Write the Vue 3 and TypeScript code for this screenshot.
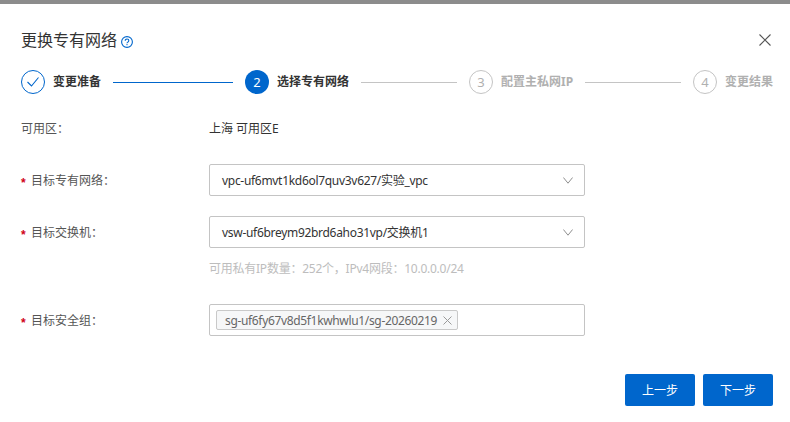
<script setup lang="ts">
interface Step { label: string; state: 'done' | 'active' | 'todo'; num: number; lineOn: boolean }
const steps: Step[] = [
  { label: '变更准备', state: 'done', num: 1, lineOn: true },
  { label: '选择专有网络', state: 'active', num: 2, lineOn: false },
  { label: '配置主私网IP', state: 'todo', num: 3, lineOn: false },
]
</script>

<template>
  <div class="page">
    <div class="topbar"></div>
    <div class="head">
      <div class="title-wrap">
        <span class="title">更换专有网络</span>
        <svg class="help" width="12" height="12" viewBox="0 0 12 12" fill="none">
          <circle cx="6" cy="6" r="5.4" stroke="#0066cc" stroke-width="1.1" />
          <path d="M4.2 4.8C4.2 3.7 5 3 6 3s1.8.7 1.8 1.6c0 .8-.5 1.1-1 1.5-.5.3-.8.6-.8 1.2" stroke="#0066cc" stroke-width="1.1" />
          <rect x="5.45" y="8.1" width="1.1" height="1.1" fill="#0066cc" />
        </svg>
      </div>
      <svg class="close" width="12" height="12" viewBox="0 0 12 12" fill="none">
        <path d="M.5.5l11 11M11.5.5l-11 11" stroke="#555" stroke-width="1.1" />
      </svg>
    </div>

    <div class="steps">
      <div v-for="s in steps" :key="s.num" class="step">
        <span class="circle" :class="s.state">
          <svg v-if="s.state === 'done'" width="14" height="12" viewBox="0 0 14 12" fill="none">
            <path d="M1.5 6l4 4 7-8.5" stroke="#0066cc" stroke-width="1.1" />
          </svg>
          <template v-else>{{ s.num }}</template>
        </span>
        <span class="step-label" :class="s.state">{{ s.label }}</span>
        <span class="line" :class="{ on: s.lineOn }"></span>
      </div>
      <div class="step last">
        <span class="circle todo">4</span>
        <span class="step-label todo">变更结果</span>
      </div>
    </div>

    <div class="form">
      <div class="row zone">
        <div class="label plain">可用区：</div>
        <div class="value">上海 可用区E</div>
      </div>

      <div class="row field first">
        <div class="label"><span class="req">*</span>目标专有网络：</div>
        <div class="box select">
          <span>vpc-uf6mvt1kd6ol7quv3v627/实验_vpc</span>
          <svg class="arrow" width="10" height="7" viewBox="0 0 10 7" fill="none">
            <path d="M.4.5L5 6.2 9.6.5" stroke="#8f8f8f" stroke-width="1" />
          </svg>
        </div>
      </div>

      <div class="row field second">
        <div class="label"><span class="req">*</span>目标交换机：</div>
        <div class="box select">
          <span>vsw-uf6breym92brd6aho31vp/交换机1</span>
          <svg class="arrow" width="10" height="7" viewBox="0 0 10 7" fill="none">
            <path d="M.4.5L5 6.2 9.6.5" stroke="#8f8f8f" stroke-width="1" />
          </svg>
        </div>
      </div>
      <div class="hint">可用私有IP数量：252个，IPv4网段：10.0.0.0/24</div>

      <div class="row field third">
        <div class="label"><span class="req">*</span>目标安全组：</div>
        <div class="box multi">
          <span class="tag">
            <span class="tag-text">sg-uf6fy67v8d5f1kwhwlu1/sg-20260219</span>
            <svg width="9" height="9" viewBox="0 0 9 9" fill="none">
              <path d="M.5.5l8 8M8.5.5l-8 8" stroke="#9a9a9a" stroke-width="1" />
            </svg>
          </span>
        </div>
      </div>
    </div>

    <div class="footer">
      <button class="btn" type="button">上一步</button>
      <button class="btn" type="button">下一步</button>
    </div>
  </div>
</template>

<style>
html, body { margin: 0; background: #fff; }
</style>

<style scoped>
.page {
  width: 790px;
  height: 422px;
  overflow: hidden;
  background: #fff;
  font-family: "Noto Sans", "Noto Sans CJK SC", sans-serif;
  font-size: 12px;
  color: #333;
  box-sizing: border-box;
}
.topbar { height: 4px; background: #8c8c8c; }
.head {
  display: flex;
  justify-content: space-between;
  align-items: center;
  height: 24px;
  margin-top: 24px;
  padding: 0 19px 0 21px;
}
.title-wrap { display: flex; align-items: center; gap: 4px; }
.title { font-size: 16px; line-height: 24px; color: #333; }
.help { display: block; margin-top: 3px; }
.close { display: block; }
.steps {
  display: flex;
  margin-top: 18px;
  padding: 0 17px 0 21px;
}
.step {
  flex: 0 0 224px;
  display: flex;
  align-items: center;
  height: 24px;
}
.step.last { flex: 0 0 auto; }
.circle {
  flex: none;
  width: 24px;
  height: 24px;
  box-sizing: border-box;
  border-radius: 50%;
  display: flex;
  align-items: center;
  justify-content: center;
  font-size: 13px;
}
.circle.done { border: 1px solid #0066cc; }
.circle.active { background: #0066cc; color: #fff; }
.circle.todo { border: 1px solid #c4c4c4; color: #b0b0b0; }
.step-label { margin-left: 8px; white-space: nowrap; font-weight: 700; line-height: 24px; }
.step-label.done, .step-label.active { color: #333; }
.step-label.todo { color: #b0b0b0; }
.line { flex: 1; height: 1px; margin: 0 12px; background: #c4c4c4; }
.line.on { background: #0066cc; }
.form { padding-left: 21px; width: 564px; }
.row { display: flex; align-items: center; }
.zone { margin-top: 22px; height: 24px; }
.field { height: 32px; }
.first { margin-top: 24px; }
.second { margin-top: 20px; }
.third { margin-top: 26px; }
.label { flex: 0 0 188px; color: #555; white-space: nowrap; }
.req {
  display: inline-block;
  width: 10px;
  color: #d0021b;
  font-family: "Liberation Sans", sans-serif;
  font-size: 12px;
  font-weight: 700;
  vertical-align: -2px;
}
.value { color: #333; }
.box {
  flex: 1;
  height: 32px;
  box-sizing: border-box;
  border: 1px solid #c4c4c4;
  border-radius: 2px;
  display: flex;
  align-items: center;
  background: #fff;
}
.select {
  padding: 0 11px 0 12px;
  justify-content: space-between;
  color: #333;
  letter-spacing: -0.3px;
}
.arrow { display: block; }
.hint {
  margin: 12px 0 0 188px;
  line-height: 18px;
  color: #bdbdbd;
  white-space: nowrap;
  letter-spacing: -0.24px;
}
.multi { padding-left: 6px; }
.tag {
  display: inline-flex;
  align-items: center;
  gap: 6px;
  height: 20px;
  box-sizing: border-box;
  padding: 0 5px 0 8px;
  background: #f6f7f8;
  border: 1px solid #c9c9c9;
  border-radius: 2px;
  color: #666;
  white-space: nowrap;
}
.tag-text { letter-spacing: -0.34px; }
.footer {
  display: flex;
  justify-content: flex-end;
  gap: 8px;
  margin-top: 38px;
  padding-right: 17px;
}
.btn {
  width: 70px;
  height: 32px;
  border: 0;
  border-radius: 2px;
  background: #0066cc;
  color: #fff;
  font: inherit;
  padding: 0;
}
</style>
